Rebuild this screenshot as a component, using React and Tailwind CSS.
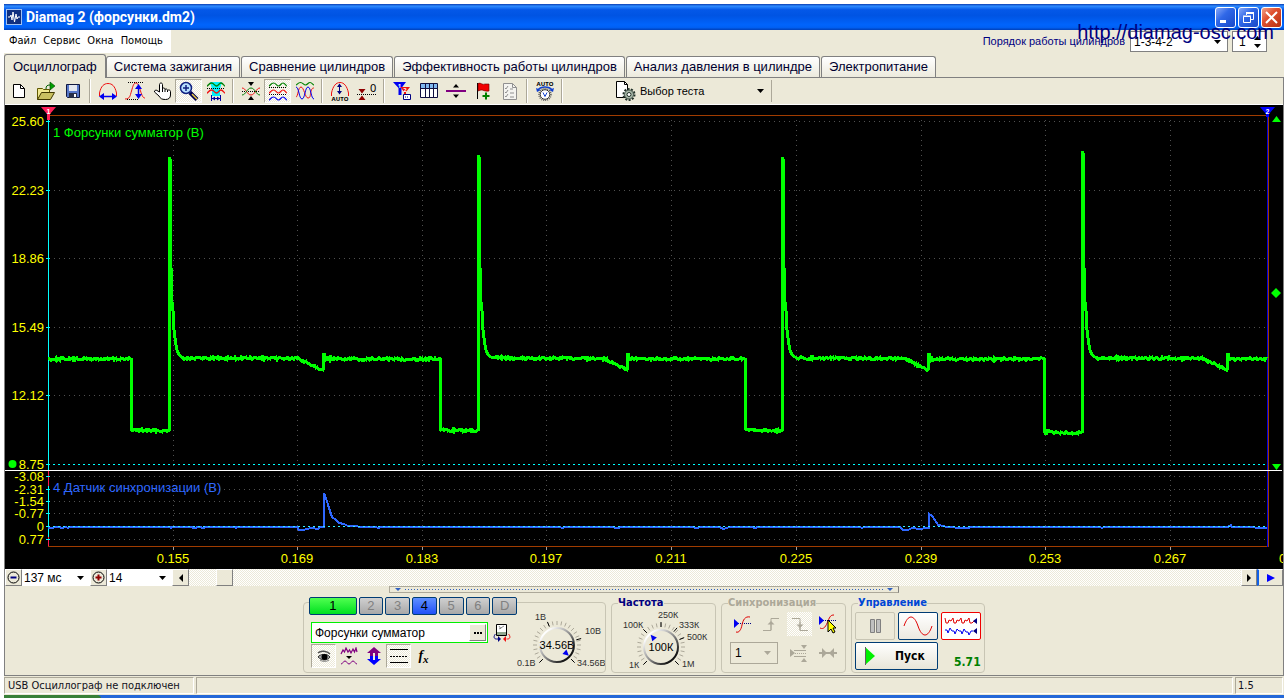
import React from "react";

const UI = "font-['Liberation_Sans',Arial,sans-serif]";
const TAHOMA = "font-['DejaVu_Sans_Condensed','DejaVu_Sans',sans-serif]";
const CHECKER = "bg-[repeating-conic-gradient(#ffffff_0_25%,#ece9d8_0_50%)] bg-[length:2px_2px]";
const RAISED = "border border-t-white border-l-white border-r-[#808080] border-b-[#808080] bg-[#ece9d8]";
const PRESSED = "border border-t-[#aca899] border-l-[#aca899] border-r-white border-b-white";

const BLUE = "#0000f0";
const RED = "#f01010";
const GREEN = "#008000";

/* ---------- waveform data ---------- */

function makeNoise(seed) {
  let s = seed;
  return () => {
    s = (s * 1103515245 + 12345) % 2147483648;
    return s / 2147483648 - 0.5;
  };
}

function injectorTrace() {
  const rnd = makeNoise(7);
  const pts = [];
  const flat = (x0, x1, y0, y1, amp) => {
    for (let x = x0; x < x1; x += 1) {
      const t = (x - x0) / (x1 - x0);
      pts.push([x, y0 + (y1 - y0) * t + rnd() * amp]);
    }
  };
  const cycles = [
    { drop: 131, rise: 169, peak: 157, low: 430, dip: 298, end: 323 },
    { drop: 440, rise: 478, peak: 155, low: 430, dip: 603, end: 627 },
    { drop: 745, rise: 782, peak: 157, low: 430, dip: 904, end: 928 },
    { drop: 1044, rise: 1082, peak: 151, low: 432, dip: 1203, end: 1227 },
  ];
  let x = 48;
  cycles.forEach((c) => {
    flat(x, c.drop, 359, 359, 2.4);
    pts.push([c.drop, 359], [c.drop, c.low - 1]);
    flat(c.drop + 1, c.rise - 1, c.low, c.low + 1, 2.4);
    pts.push(
      [c.rise, c.low], [c.rise, c.peak], [c.rise + 1, c.peak + 2], [c.rise + 1, 235], [c.rise + 2, 268],
      [c.rise + 3, 302], [c.rise + 4, 311], [c.rise + 5, 330], [c.rise + 6, 338], [c.rise + 7, 345],
      [c.rise + 8, 350], [c.rise + 10, 355], [c.rise + 13, 357]
    );
    flat(c.rise + 14, c.dip, 358, 358.5, 2.4);
    flat(c.dip, c.end, 358.5, 370, 2.4);
    pts.push([c.end, 370], [c.end + 1, 353], [c.end + 1, 358]);
    x = c.end + 2;
  });
  flat(x, 1268, 359, 359, 2.4);
  return pts.map(([a, b]) => a + "," + b.toFixed(1)).join(" ");
}

const SYNC_TRACE =
  "48,528 60,527 61,528 66,527 68,528 70,527 170,527 171,528 172,527 192,527 193,528 200,527 203,528 206,527 235,527 236,528 237,527 297,527 299,530 304,530 306,529 312,528 318,529 320,527 324,527 324,493 326,498 329,508 332,517 336,520 339,523 344,524 348,526 354,526 362,527 376,527 378,528 381,527 520,527 560,527 562,528 566,527 610,527 618,528 621,527 690,527 698,528 700,527 720,527 723,529 730,527 752,527 755,528 758,527 860,527 862,528 864,527 900,527 903,530 908,530 912,528 920,529 926,528 929,528 929,514 932,516 935,520 938,525 944,526 946,527 964,528 969,528 970,527 1100,527 1102,528 1104,527 1228,527 1231,525 1232,527 1254,527 1256,528 1267,528";

const Y_MAIN = [["25.60", 121], ["22.23", 190], ["18.86", 258], ["15.49", 327], ["12.12", 395], ["8.75", 464]];
const Y_SYNC = [["-3.08", 476], ["-2.31", 489], ["-1.54", 501], ["-0.77", 513], ["0", 526], ["0.77", 539]];
const X_AXIS = [["0.155", 173], ["0.169", 297], ["0.183", 422], ["0.197", 546], ["0.211", 671], ["0.225", 796], ["0.239", 921], ["0.253", 1045], ["0.267", 1170]];

function Scope() {
  return (
    <svg viewBox="5 105 1278 464" className={"block w-full bg-black text-[13px] " + UI} role="img" aria-label="Осциллограмма">
      <g shapeRendering="crispEdges">
        {Y_MAIN.slice(0, 5).map(([l, y]) => (
          <line key={l} x1="54" x2="1267" y1={y + 0.5} y2={y + 0.5} stroke="#505050" strokeDasharray="1 4" />
        ))}
        {Y_SYNC.filter(([l]) => l !== "0").map(([l, y]) => (
          <line key={l} x1="54" x2="1267" y1={y + 0.5} y2={y + 0.5} stroke="#505050" strokeDasharray="1 4" />
        ))}
        {X_AXIS.map(([l, x]) => (
          <g key={l}>
            <line x1={x + 0.5} x2={x + 0.5} y1="120" y2="545" stroke="#505050" strokeDasharray="1 4" />
            <line x1={x + 0.5} x2={x + 0.5} y1="547" y2="550" stroke="#a0a0a0" />
          </g>
        ))}
        <path d="M48 115.500H1268M1268.500 115V547M48 546.500H1268" stroke="#a03c00" fill="none" />
        <path d="M1267.500 115V547" stroke="#0000e0" />
        <path d="M5 470.500H1282" stroke="#fff" />
        <path d="M48.500 115V470" stroke="#00ffff" />
        <path d="M48.500 471V546" stroke="#ff1850" />
        <path d="M48.500 486V537" stroke="#00ffff" />
        {Y_MAIN.concat(Y_SYNC).map(([l, y]) => (
          <path key={l} d={"M46 " + (y + 0.5) + "h4"} stroke="#00ffff" />
        ))}
        <path d="M48 464.500H1267" stroke="#00ffff" strokeDasharray="2 3" />
      </g>
      <polyline points={injectorTrace()} fill="none" stroke="#00ff00" strokeWidth="3" shapeRendering="crispEdges" />
      <polyline points={SYNC_TRACE} fill="none" stroke="#2f68ff" strokeWidth="2" shapeRendering="crispEdges" />
      <path d="M48 526.500H1267" stroke="#30f0ff" strokeDasharray="2 3" shapeRendering="crispEdges" />
      <path d="M41 107h15l-6 7v6h-3v-6z" fill="#ff2058" />
      <path d="M1260 107h15l-6 7v3h-3v-3z" fill="#0000ff" />
      <text x="48.500" y="113.500" textAnchor="middle" fontSize="7" fontWeight="700" fill="#fff">1</text>
      <text x="1267.500" y="113.500" textAnchor="middle" fontSize="7" fontWeight="700" fill="#fff">2</text>
      <path d="M1272 122l4.500-6 4.500 6zM1272 464h9l-4.500 6zM1271 293l5-5 5 5-5 5z" fill="#00ff00" />
      <circle cx="12.500" cy="464" r="4" fill="#00ff00" />
      <g fill="#ffff00">
        {Y_MAIN.map(([l, y]) => <text key={l} x="44" y={y + 5} textAnchor="end">{l}</text>)}
        {Y_SYNC.map(([l, y]) => <text key={l} x="44" y={y + 5} textAnchor="end">{l}</text>)}
        {X_AXIS.map(([l, x]) => <text key={l} x={x} y="563" textAnchor="middle">{l}</text>)}
        <text x="1279" y="563">0</text>
      </g>
      <text x="53" y="137" fill="#00ff00">1 Форсунки сумматор (В)</text>
      <text x="53" y="492" fill="#2f68ff">4 Датчик синхронизации (В)</text>
    </svg>
  );
}

/* ---------- toolbar icons, 20x20 grid ---------- */

function Icon({ children }) {
  return <svg viewBox="0 0 20 20" className="size-5 shrink-0" fill="none" aria-hidden="true">{children}</svg>;
}

const wave = (y) => "M1 " + y + "c1 0 2-3 4.500-3s3 3 5 3 2.500-3 4.500-3 3 3 4 3";

const ICONS = {
  new: <Icon><path d="M4.500 3.500h7l4 4v9h-11z" fill="#fff" stroke="#000" /><path d="M11.500 3.500v4h4" stroke="#000" /></Icon>,
  open: (
    <Icon>
      <path d="M1.500 18.500v-11h5l1 1h6v4" fill="#f0e890" stroke="#605800" />
      <path d="M1.500 18.500l4-7h13l-4 7z" fill="#c8c060" stroke="#403800" />
      <path d="M10 8c0-3 1-4 4-4" stroke="#006000" />
      <path d="M14 1v8l5-4z" fill="#00a000" stroke="#004000" strokeWidth=".6" />
    </Icon>
  ),
  save: (
    <Icon>
      <path d="M3.500 3.500h13v13h-12l-1-1z" fill="#5878c8" stroke="#101840" />
      <path d="M6 4h8v6H6z" fill="#e4e8f0" /><path d="M6 12h8v5H6z" fill="#283048" /><path d="M11 13h2v3h-2z" fill="#fff" />
    </Icon>
  ),
  lens: (
    <Icon>
      <path d="M1.500 15V12C3 5 6 2.500 10 2.500S17 5 18.500 12V15" stroke={RED} />
      <path d="M3 15.500h14" stroke={BLUE} strokeWidth="1.500" /><path d="M6 12v7l-5-3.500zM14 12v7l5-3.500z" fill={BLUE} />
    </Icon>
  ),
  amp: (
    <Icon>
      <path d="M3 1.500h16M2 18.500h11" stroke="#000" strokeDasharray="1 1" />
      <path d="M0 18c5 0 5-3 6.500-8S8.500 2 11 2s3.500 5 5 9.500S18.500 17 20 17" stroke={RED} />
      <path d="M13.500 5v11" stroke={BLUE} strokeWidth="1.500" /><path d="M10 8h7l-3.500-5zM10 13h7l-3.500 5z" fill={BLUE} />
    </Icon>
  ),
  hand: (
    <Icon>
      <path d="M7.500 11V3.500c0-2 3-2 3 0V8l0-.5c1-1 2.500-.5 2.500 1 1-1 2.500-.5 2.500 1 1-1 3-.5 3 1V14c0 3-2 4.500-5 4.500-4 0-5-1-6.500-3.500L2.500 11c-.5-1.500 1.500-2.500 2.500-1.500z" fill="#fff" stroke="#000" />
      <path d="M10.500 7.500V11M13 8.500V11M15.500 9.500V11" stroke="#000" />
    </Icon>
  ),
  zoom: (
    <Icon>
      <path d="M11 11.500l7 7" stroke="#000050" strokeWidth="4" /><path d="M13 13l5 5" stroke="#e8c840" strokeWidth="1.500" />
      <circle cx="7" cy="7" r="5.500" fill="#b8e0ff" stroke="#102080" strokeWidth="1.500" />
      <path d="M7 4v6M4 7h6" stroke="#102080" strokeWidth="1.500" />
    </Icon>
  ),
  cursor: (
    <Icon>
      <path d="M4 1h12l-2 7v7H6V8z" fill="#00f0f8" />
      <path d={wave(5)} stroke={GREEN} strokeWidth="1.300" /><path d="M1 7.500h18" stroke="#000" strokeDasharray="1 1" />
      <path d={wave(12)} stroke={RED} strokeWidth="1.300" />
      <path d="M5.500 14v6M14.500 14v6M6 17.500h8" stroke="#0000a0" /><path d="M9 15.500v4l-3-2zM11 15.500v4l3-2z" fill="#0000a0" />
    </Icon>
  ),
  center: (
    <Icon>
      <path d="M7 1h6l-3 4zM7 19h6l-3-4z" fill="#000" />
      <path d="M1 10.500h18" stroke="#000" strokeDasharray="1 1" />
      <path d="M1 7c4 0 5 7 9 7s5-7 9-7" stroke={RED} /><path d="M1 14c4 0 5-7 9-7s5 7 9 7" stroke={GREEN} />
    </Icon>
  ),
  split: (
    <Icon>
      <path d={wave(5)} stroke={GREEN} strokeWidth="1.200" /><path d={wave(12)} stroke={RED} strokeWidth="1.200" /><path d={wave(19)} stroke={BLUE} strokeWidth="1.200" />
      <path d="M1 6.500h18M1 13.500h18" stroke="#000" strokeDasharray="1 1" />
    </Icon>
  ),
  overlay: (
    <Icon>
      <path d="M1 4c1 0 2-2.500 4.500-2.500s3 2.500 5 2.500 2.500-2.500 4.500-2.500 3 2.500 4 2.500" stroke={GREEN} strokeWidth="1.200" />
      <path d="M1 16C3 16 3 6 6 6s4 11 7 11 2-4 3-7 2-3 3-3" stroke={RED} />
      <path d="M1 6c3 0 3 12 6 12s3-12 6-12 3 12 6 12" stroke={BLUE} />
    </Icon>
  ),
  autoLens: (
    <Icon>
      <path d="M1.500 15V12C3 5 6 1.500 10 1.500S17 5 18.500 12V15" stroke={RED} />
      <path d="M9.500 4v9" stroke="#000080" /><path d="M7 6h5L9.500 2.500zM7 10h5l-2.500 3.500z" fill="#000080" />
      <text x="10" y="19.500" textAnchor="middle" fontSize="6" fontWeight="700" fill="#000">AUTO</text>
    </Icon>
  ),
  zero: (
    <Icon>
      <path d="M0 13.500h20" stroke="#000" strokeDasharray="1 1" />
      <path d="M1.500 8h7L5 12.500zM1.500 19h7L5 14.500z" fill="#900000" />
      <text x="13" y="11" fontSize="11" fill="#000">0</text>
    </Icon>
  ),
  filter: (
    <Icon>
      <path d="M1 1h13L9.500 7v7h-3V7z" fill="#0000f0" /><path d="M8.500 6h9.500l-4 5v4h-2v-4z" fill="#f01010" />
      <text x="7.500" y="7" textAnchor="middle" fontSize="6" fontWeight="700" fill="#fff">1</text>
      <text x="13" y="11" textAnchor="middle" fontSize="6" fontWeight="700" fill="#fff">2</text>
      <path d="M11.500 13.500h7v5h-7z" fill="#fff" stroke="#000080" /><path d="M13 16h4" stroke="#000080" strokeDasharray="1 1" />
    </Icon>
  ),
  table: (
    <Icon>
      <path d="M1.500 2.500h17v14h-17z" fill="#fff" stroke="#101040" /><path d="M2 3h16v4H2z" fill="#80b8f0" />
      <path d="M2 7.500h16M6.500 3v13M10.500 3v13M14.500 3v13" stroke="#101040" />
    </Icon>
  ),
  line: <Icon><path d="M0 10h20" stroke="#800080" strokeWidth="2" /><path d="M7 6.500h6L10 3zM7 13.500h6L10 17z" fill="#000" /></Icon>,
  flag: (
    <Icon>
      <path d="M4.500 2v16" stroke="#000" /><path d="M5 2.500c3-1.500 4 2 7 .5l4 0v7c-4 1-6-1.500-8-1l-3 1z" fill="#f00000" stroke="#600" strokeWidth=".6" />
      <path d="M13 11.500v7M9.500 15h7" stroke="#008000" strokeWidth="2" />
    </Icon>
  ),
  checklist: (
    <Icon>
      <path d="M3.500 2.500h9l4 4v12h-13z" fill="#f4f4f0" stroke="#909090" /><path d="M12.500 2.500v4h4" stroke="#909090" />
      <path d="M5 7l1 1 2-3M5 11l1 1 2-3M5 15l1 1 2-3M10 8h3M10 12h4M10 16h4" stroke="#909090" />
    </Icon>
  ),
  autoKnob: (
    <Icon>
      <text x="10" y="5" textAnchor="middle" fontSize="6" fontWeight="700" fill="#000">AUTO</text>
      <path d="M3 9c3-4 11-4 14 0" stroke="#1040d0" strokeWidth="1.500" /><path d="M1 7l1 4 4-2zM19 7l-1 4-4-2z" fill="#1040d0" />
      <circle cx="10" cy="13.500" r="6" stroke="#606060" strokeWidth="1.500" strokeDasharray="1 1" />
      <circle cx="10" cy="13.500" r="4.800" fill="#fff" stroke="#303030" /><path d="M8 11.500l2 4 2-4" stroke="#1040d0" />
    </Icon>
  ),
};

const GROUPS = [
  [["new", "Новый"], ["open", "Открыть"], ["save", "Сохранить"]],
  [["lens", "Растянуть"], ["amp", "Амплитуда"], ["hand", "Рука"], ["zoom", "Масштаб", true], ["cursor", "Курсоры"]],
  [["center", "По центру"], ["split", "Разделить", true], ["overlay", "Совместить"]],
  [["autoLens", "Авто"], ["zero", "Ноль"]],
  [["filter", "Фильтр"], ["table", "Таблица"], ["line", "Линия"], ["flag", "Метка"], ["checklist", "Отчёт"]],
  [["autoKnob", "Автонастройка"]],
];

function Separator() {
  return <span className="mx-[3px] h-6 w-[2px] shrink-0 border-l border-[#aca899] bg-white" />;
}

function Caret({ color = "#000" }) {
  return <svg viewBox="0 0 7 4" className="h-1 w-[7px] shrink-0" aria-hidden="true"><path d="M0 0h7L3.500 4z" fill={color} /></svg>;
}

function Picker({ label, options, className, caret, caretClass = "right-[6px]" }) {
  return (
    <span className={"relative flex shrink-0 items-center " + className}>
      <select aria-label={label} className="h-full w-full appearance-none bg-transparent pl-[2px] text-[12px] leading-none outline-none">
        {options.map((o) => <option key={o}>{o}</option>)}
      </select>
      <span className={"pointer-events-none absolute flex " + caretClass}><Caret color={caret} /></span>
    </span>
  );
}

/* ---------- window chrome ---------- */

function WinButton({ label, red, children }) {
  return (
    <button aria-label={label} className={"flex size-[21px] items-center justify-center rounded-[3px] border border-white " + (red ? "bg-[linear-gradient(135deg,#f0a088,#e05030_40%,#b83010)]" : "bg-[linear-gradient(135deg,#88a8f8,#3068e8_40%,#1848c8)]")}>
      <svg viewBox="0 0 17 17" className="size-[17px]" fill="none" stroke="#fff" aria-hidden="true">{children}</svg>
    </button>
  );
}

function TitleBar() {
  return (
    <header className="flex h-[26px] items-center bg-[linear-gradient(#0a3cb0,#2e8cff_8%,#0458e8_22%,#0054e3_45%,#0064fc_80%,#0060f4_90%,#0040b8)] pl-[2px] pr-[2px]">
      <svg viewBox="0 0 16 16" className="size-4" aria-hidden="true">
        <path d="M0 0h16v16H0z" fill="#a0c0f0" /><path d="M1 1h14v14H1z" fill="#103080" />
        <path d="M2 8h2l1-2 1 5 1-8 1.500 10L10 5l1 5 1-2h2" stroke="#fff" fill="none" />
      </svg>
      <h1 className="ml-1 flex-1 font-['Roboto',sans-serif] text-[14px] font-bold text-white">Diamag 2 (форсунки.dm2)</h1>
      <div className="flex gap-[2px]">
        <WinButton label="Свернуть"><path d="M3 12.500h6" strokeWidth="3" /></WinButton>
        <WinButton label="Развернуть"><path d="M6.500 6V3.500h7v7H11" /><path d="M6 4h8" strokeWidth="2" /><path d="M3.500 7.500h7v6h-7zM3 7h8" /></WinButton>
        <WinButton label="Закрыть" red><path d="M3 3l11 11M14 3l-11 11" strokeWidth="2" /></WinButton>
      </div>
    </header>
  );
}

function MenuBar() {
  return (
    <div className="relative flex h-6 items-start justify-between">
      <nav className={"flex h-[23px] items-center gap-[7px] bg-white pl-[5px] pr-2 text-[11px] " + TAHOMA}>
        {["Файл", "Сервис", "Окна", "Помощь"].map((m) => <button key={m}>{m}</button>)}
      </nav>
      <div className="flex items-center pr-[17px] pt-px">
        <label htmlFor="order" className={"pr-[5px] text-[11px] text-[#000080] " + UI}>Порядок работы цилиндров</label>
        <span className="relative flex h-[21px] w-[98px] items-center border border-[#808080] bg-white">
          <select id="order" className={"h-full w-full appearance-none pl-[3px] text-[12px] leading-none " + UI}><option>1-3-4-2</option></select>
          <span className="pointer-events-none absolute right-[6px] flex"><Caret /></span>
        </span>
        <span className="ml-1 flex h-[21px] w-[35px] items-center border border-[#808080] bg-white pr-[5px]">
          <input aria-label="Цилиндр" defaultValue="1" className={"w-0 flex-1 pl-[6px] text-[12px] leading-none " + UI} />
          <svg viewBox="0 0 7 12" className="h-3 w-[7px]" aria-hidden="true"><path d="M0 4h7L3.500 0zM0 8h7l-3.500 4z" fill="#000" /></svg>
        </span>
      </div>
      <a href="http://diamag-osc.com" className={"absolute right-[10px] -top-[10px] text-[20px] leading-6 text-[#000080] " + UI}>http://diamag-osc.com</a>
    </div>
  );
}

function Tabs() {
  const tabs = ["Осциллограф", "Система зажигания", "Сравнение цилиндров", "Эффективность работы цилиндров", "Анализ давления в цилиндре", "Электропитание"];
  return (
    <div role="tablist" className={"flex h-[23px] items-end text-[13px] text-[#000030] " + UI}>
      {tabs.map((t, i) => (
        <button
          key={t}
          role="tab"
          aria-selected={i === 0}
          className={"shrink-0 rounded-t-[3px] border border-[#808080] whitespace-nowrap leading-[18px] " + (i === 0 ? "relative -mb-px h-6 border-b-0 bg-[#ece9d8] px-2" : "mr-px h-[21px] border-b-0 bg-[linear-gradient(#ffffff,#eceadd)] px-[7px]")}
        >
          {t}
        </button>
      ))}
    </div>
  );
}

function Toolbar() {
  return (
    <div role="toolbar" className="flex h-[26px] items-center">
      {GROUPS.map((g, i) => (
        <React.Fragment key={i}>
          {i > 0 && <Separator />}
          {g.map(([name, label, on]) => (
            <button key={name} aria-label={label} aria-pressed={!!on} className={"flex h-6 w-[27px] shrink-0 items-center justify-center " + (on ? CHECKER + " " + PRESSED : "")}>
              {ICONS[name]}
            </button>
          ))}
        </React.Fragment>
      ))}
      <Separator />
      <button className={"ml-12 flex h-6 w-[150px] items-center gap-1 text-[11px] " + UI}>
        <svg viewBox="0 0 22 20" className="h-5 w-[22px]" fill="none" aria-hidden="true">
          <path d="M2.500 .5h8l3 3v13h-11z" fill="#fff" stroke="#000" /><path d="M10.500 .5v3h3" stroke="#000" />
          <circle cx="15" cy="13.500" r="5.500" stroke="#203028" strokeWidth="2" strokeDasharray="2 1.400" />
          <circle cx="15" cy="13.500" r="4.500" fill="#a8b8a8" stroke="#405048" /><circle cx="15" cy="13.500" r="2" fill="#fff" stroke="#203028" />
        </svg>
        <span className="flex-1 text-left">Выбор теста</span>
        <Caret />
      </button>
      <span className="ml-1"><Separator /></span>
    </div>
  );
}

/* ---------- bottom area ---------- */

function ScrollRow() {
  return (
    <div className={"flex h-[17px] items-stretch text-[12px] " + UI}>
      <button aria-label="Уменьшить" className={"flex w-[17px] shrink-0 items-center justify-center " + RAISED}>
        <svg viewBox="0 0 13 13" className="size-[13px] shrink-0" fill="none" aria-hidden="true"><circle cx="6.500" cy="6.500" r="5.500" stroke="#000" /><path d="M3.500 6.500h6" stroke="#000080" strokeWidth="2" /></svg>
      </button>
      <Picker label="Длительность" options={["137 мс"]} className="w-[68px] bg-white" />
      <button aria-label="Увеличить" className={"flex w-[17px] shrink-0 items-center justify-center " + RAISED}>
        <svg viewBox="0 0 13 13" className="size-[13px] shrink-0" fill="none" aria-hidden="true"><circle cx="6.500" cy="6.500" r="5.500" stroke="#000" /><path d="M3.500 6.500h6M6.500 3.500v6" stroke="#900000" strokeWidth="2" /></svg>
      </button>
      <Picker label="Масштаб" options={["14"]} className="w-[65px] bg-white" />
      <button aria-label="Назад" className={"flex w-[17px] shrink-0 items-center justify-center " + RAISED}>
        <svg viewBox="0 0 4 8" className="h-2 w-1" aria-hidden="true"><path d="M4 0v8L0 4z" /></svg>
      </button>
      <div className={"flex flex-1 " + CHECKER}><span className={"ml-[27px] w-[17px] " + RAISED} /></div>
      <button aria-label="Вперёд" className={"flex w-4 shrink-0 items-center justify-center " + RAISED}>
        <svg viewBox="0 0 4 8" className="h-2 w-1" aria-hidden="true"><path d="M0 0v8l4-4z" /></svg>
      </button>
      <button aria-label="Воспроизвести" className={"flex w-[26px] shrink-0 items-center justify-center border-l-2! border-l-[#1060e8]! " + RAISED}>
        <svg viewBox="0 0 8 8" className="size-2" aria-hidden="true"><path d="M0 0v8l8-4z" fill="#0000ff" /></svg>
      </button>
    </div>
  );
}

function Knob({ box, cx, cy, value, labels, majors, pointer, className }) {
  const ticks = [];
  for (let i = 0; i <= 24; i += 1) ticks.push(135 + i * 11.25);
  const ray = (a, r0, r1) => {
    const r = (a * Math.PI) / 180;
    return "M" + (cx + r0 * Math.cos(r)) + " " + (cy + r0 * Math.sin(r)) + "L" + (cx + r1 * Math.cos(r)) + " " + (cy + r1 * Math.sin(r));
  };
  const id = "rim" + cx;
  return (
    <svg viewBox={box} className={"shrink-0 text-[9px] " + UI + " " + className} role="img" aria-label={value}>
      <defs>
        <linearGradient id={id} x1="0" y1="0" x2="1" y2="1"><stop offset=".15" stopColor="#fff" /><stop offset=".5" stopColor="#909090" /><stop offset=".85" stopColor="#101010" /></linearGradient>
      </defs>
      <path d={ticks.map((a) => ray(a, 20, 24)).join("")} stroke="#aca899" />
      <path d={majors.map((a) => ray(a, 20, 25)).join("")} stroke="#000" />
      <circle cx={cx} cy={cy} r="17" fill="#ece9d8" stroke={"url(#" + id + ")"} strokeWidth="2" />
      <path transform={"rotate(" + pointer + " " + cx + " " + cy + ")"} d={"M" + (cx + 16) + " " + cy + "l-6-3v6z"} fill="#0000f0" />
      <text x={cx} y={cy + 4} textAnchor="middle" fontSize="11" fill="#000">{value}</text>
      {labels.map(([t, x, y]) => <text key={t} x={x} y={y} fill="#303030">{t}</text>)}
    </svg>
  );
}

function SmallIcon({ label, on, children, className = "" }) {
  return (
    <button aria-label={label} className={"flex h-6 w-[25px] shrink-0 items-center justify-center " + (on ? CHECKER + " " + PRESSED : "") + " " + className}>
      {children}
    </button>
  );
}

function ChannelGroup() {
  return (
    <section aria-label="Канал" className={"mt-[5px] flex w-[303px] rounded-[4px] border border-[#c8c5b4] " + UI}>
      <div className="-mt-[6px] flex w-[213px] flex-col pl-[5px]">
        <div className="flex gap-[2px] bg-[#ece9d8]">
          {["1", "2", "3", "4", "5", "6", "D"].map((c) => (
            <button
              key={c}
              className={"h-[18px] rounded-[2px] border border-[#003c74] text-[13px] leading-4 " + (c === "1" ? "w-12 bg-[linear-gradient(#50ff50,#00e020)] text-black" : c === "4" ? "w-[25px] bg-[linear-gradient(#6090ff,#2050f8)] text-black" : "w-[25px] bg-[linear-gradient(#d0d0d0,#a8a8a8)] text-[#808080]")}
            >
              {c}
            </button>
          ))}
        </div>
        <div className="mt-[7px] flex items-center gap-[5px] pl-[2px]">
          <div className="flex h-[21px] w-[177px] items-center border border-[#00f000] bg-white">
            <input aria-label="Имя канала" defaultValue="Форсунки сумматор" className="w-0 flex-1 pl-[3px] text-[12px] leading-4" />
            <button aria-label="Выбрать" className={"mr-px flex h-[17px] w-[17px] items-center justify-center " + RAISED}>
              <svg viewBox="0 0 8 2" className="h-[2px] w-2" aria-hidden="true"><path d="M0 0h2v2H0zM3 0h2v2H3zM6 0h2v2H6z" /></svg>
            </button>
          </div>
          <button aria-label="Сменить датчик">
            <svg viewBox="0 0 18 18" className="size-[18px]" fill="none" aria-hidden="true">
              <path d="M3.500 .5h10v11h-10z" fill="#fff" stroke="#000" /><path d="M4 8h9v3H4z" fill="#90a890" /><path d="M6 5l5-3M6 2l2 3" stroke="#606060" strokeWidth=".7" />
              <path d="M2.500 10c-2 2-2 5 1 5h2" stroke="#000080" /><path d="M5 12v6l3-3z" fill="#000080" />
              <path d="M15.500 10c2 2 2 5-1 5h-1" stroke={RED} /><path d="M13 12v6l-3-3z" fill={RED} />
            </svg>
          </button>
        </div>
        <div className="mt-px flex pl-[2px]">
          <SmallIcon label="Видимость" on>
            <svg viewBox="0 0 14 12" className="h-3 w-[14px]" fill="none" aria-hidden="true"><path d="M1 3c3-3 9-2 12 1" stroke="#505050" strokeWidth="1.500" /><path d="M1 7c2-3 9-4 12 0-3 4-8 4-12 0z" fill="#a8a8a8" stroke="#303030" /><circle cx="7.500" cy="7" r="3" fill="#000" /><path d="M3 10c3 2 6 2 9 0" stroke="#808080" /></svg>
          </SmallIcon>
          <SmallIcon label="Фильтр сигнала">
            <svg viewBox="0 0 18 18" className="size-[18px]" fill="none" stroke="#800080" aria-hidden="true"><path d="M1 7l2-4 1.500 2L6 1l2 4 1.500-2L11 6l2-4 1.500 3L16 1l1 4" strokeWidth="1.200" /><path d="M6 9h6l-3 3z" fill="#000" stroke="none" /><path d="M1 17c2 0 2-3 4-3s2 3 4 3 2-3 4-3 2 3 4 3" /></svg>
          </SmallIcon>
          <SmallIcon label="Смещение">
            <svg viewBox="0 0 14 18" className="h-[18px] w-[14px]" aria-hidden="true"><path d="M0 6l7-6 7 6h-3v3H8V6H6v3H3V6z" fill="#800080" /><path d="M0 12l7 6 7-6h-3V9H8v4H6V9H3v3z" fill="#0000ff" /></svg>
          </SmallIcon>
          <SmallIcon label="Уровни" on>
            <svg viewBox="0 0 18 14" className="h-[14px] w-[18px]" stroke="#000" aria-hidden="true"><path d="M0 .5h18M0 13.500h18" /><path d="M0 7.500h18" strokeDasharray="2 1" /></svg>
          </SmallIcon>
          <SmallIcon label="Функция"><span className="font-['Liberation_Serif',serif] text-[14px] font-bold italic leading-none">f<sub className="text-[11px]">x</sub></span></SmallIcon>
        </div>
      </div>
      <Knob
        box="517 605 88 66" className="h-[66px] w-[88px]" cx={557} cy={647} value="34.56В" pointer={42} majors={[135, 247.5, 345, 45]}
        labels={[["1В", 535, 622], ["10В", 585, 636], ["34.56В", 577, 668], ["0.1В", 517, 668]]}
      />
    </section>
  );
}

function Group({ title, color, className, children }) {
  return (
    <fieldset className={"min-w-0 rounded-[4px] border border-[#c8c5b4] " + className}>
      <legend className={"ml-[6px] h-3 text-[11px] font-bold leading-3 " + TAHOMA + " " + color}>{title}</legend>
      {children}
    </fieldset>
  );
}

function Controls() {
  const big = "flex h-7 w-10 items-center justify-center rounded-[2px] border ";
  return (
    <div className="mx-auto mt-1 flex w-fit gap-[5px]">
      <ChannelGroup />
      <Group title="Частота" color="text-[#000080]" className="w-[105px]">
        <Knob
          box="612 609 103 62" className="h-[62px] w-full" cx={661} cy={647} value="100К" pointer={230} majors={[135, 225, 270, 310, 338, 45]}
          labels={[["250К", 658, 618], ["100К", 623, 628], ["333К", 679, 628], ["500К", 687, 640], ["1К", 629, 668], ["1М", 682, 667]]}
        />
      </Group>
      <Group title="Синхронизация" color="text-[#aca899]" className="w-[125px]">
        <div className="mt-[3px] flex items-center pl-[7px]">
          <SmallIcon label="По уровню">
            <Icon><path d="M2 9.500h17" stroke="#000080" strokeDasharray="1 1" /><path d="M2 5l5 4.500L2 14z" fill="#0000f0" /><path d="M4 18c3 1 5-2 6-7s3-9 8-8" stroke="#e00000" /></Icon>
          </SmallIcon>
          <SmallIcon label="Фронт" className="ml-1"><Icon><path d="M2 16.500h8v-12h8M10 8v8" stroke="#aca899" /><path d="M6.500 10.500h7L10 7z" fill="#aca899" /></Icon></SmallIcon>
          <SmallIcon label="Спад" className={"ml-1 " + CHECKER}><Icon><path d="M2 4.500h8v12h8M10 8v8" stroke="#aca899" /><path d="M6.500 10.500h7L10 14z" fill="#aca899" /></Icon></SmallIcon>
          <SmallIcon label="Курсор синхронизации" className="ml-[3px]">
            <Icon><path d="M1 6.500h18" stroke="#000080" strokeDasharray="1 1" /><path d="M1 2l5 4.500L1 11z" fill="#0000f0" /><path d="M2 14c4 2 6-2 8-7s3-6 6-6" stroke="#e00000" /><path d="M10 6v12l3-3 2 4 2-1-2-4h3z" fill="#ffff00" stroke="#000" /></Icon>
          </SmallIcon>
        </div>
        <div className="mt-[5px] flex items-center pl-2">
          <Picker label="Канал синхронизации" options={["1"]} className={"h-[22px] w-12 border border-[#aca899] pl-[2px] " + UI} caret="#aca899" />
          <SmallIcon label="Окно" className="ml-2"><Icon><path d="M1 6l5 4-5 4zM12 2h6l-3 4zM12 19h6l-3-4z" fill="#aca899" /><path d="M5 7.500h12M5 13.500h12" stroke="#aca899" /><path d="M6 10.500h12" stroke="#aca899" strokeDasharray="1 1" /></Icon></SmallIcon>
          <SmallIcon label="Сжать" className="ml-1"><Icon><path d="M1 10h18" stroke="#aca899" strokeWidth="2" /><path d="M4 5l5 5-5 5zM16 5l-5 5 5 5z" fill="#aca899" /></Icon></SmallIcon>
        </div>
      </Group>
      <Group title="Управление" color="text-[#0046d5]" className="w-[134px]">
        <div className="mt-[3px] flex gap-[3px] pl-[3px]">
          <button aria-label="Пауза" className={big + "border-[#c8c5b4]"}>
            <svg viewBox="0 0 11 14" className="h-[14px] w-[11px]" aria-hidden="true"><path d="M.5 .5h4v13h-4zM6.500 .5h4v13h-4z" fill="#c0c0c0" stroke="#808080" /></svg>
          </button>
          <button aria-label="Синусоида" className={big + "border-[#003c74] bg-[linear-gradient(#ffffff,#ece9e0)]"}>
            <svg viewBox="0 0 30 20" className="h-5 w-[30px]" fill="none" stroke="#e00000" aria-hidden="true"><path d="M1 10C5-2 11-2 15 10s10 12 14 0" /></svg>
          </button>
          <button aria-label="Два сигнала" className={big + "border-[#f00000] bg-white"}>
            <svg viewBox="0 0 34 18" className="h-[18px] w-[34px]" fill="none" aria-hidden="true">
              <path d="M1 1l1 5h2l1-3 2 1 2-3 1 5h2l1-3 2 1 2-3 1 5h2l1-3 2 1 2-3 1 5h2l2-2" stroke="#e00000" />
              <path d="M1 13h2l1 3 2-5 2 3h2l1 3 2-5 2 2h2l1 3 2-5 2 3h2l1 3 2-4h2" stroke="#0000f0" />
              <path d="M33 1v6l-4-3zM33 11v6l-4-3z" fill="#000080" />
            </svg>
          </button>
        </div>
        <div className="mt-[2px] flex items-end pb-[2px] pl-[3px]">
          <button className={"flex h-7 w-[83px] items-center rounded-[2px] border border-[#003c74] bg-[linear-gradient(#ffffff,#e8e5d8)] pl-[9px] text-[12px] font-bold " + TAHOMA}>
            <svg viewBox="0 0 10 18" className="h-[18px] w-[10px]" aria-hidden="true"><path d="M0 0v18l10-9z" fill="#00f000" /><path d="M.5 0v18" stroke="#606060" /></svg>
            <span className="ml-5">Пуск</span>
          </button>
          <output className={"ml-4 text-[12px] font-bold leading-4 text-[#008000] " + TAHOMA}>5.71</output>
        </div>
      </Group>
    </div>
  );
}

function Splitter() {
  return (
    <div className="mx-auto flex h-[7px] w-[510px] items-center gap-1 border border-t-[#aca899] border-l-[#aca899] border-r-[#808080] border-b-[#aca899] px-[5px]">
      <svg viewBox="0 0 6 3" className="h-[3px] w-[6px]" aria-hidden="true"><path d="M0 0h6L3 3z" fill="#3060c0" /></svg>
      <span className="h-px flex-1 bg-[repeating-linear-gradient(90deg,#3060c0_0_1px,transparent_1px_3px)]" />
      <svg viewBox="0 0 6 3" className="h-[3px] w-[6px]" aria-hidden="true"><path d="M0 0h6L3 3z" fill="#3060c0" /></svg>
    </div>
  );
}

function StatusBar() {
  return (
    <footer className={"flex h-[19px] gap-[2px] py-px pr-px text-[11px] leading-[15px] text-[#101020] " + TAHOMA}>
      <span className={"w-[190px] pl-[3px] " + PRESSED}>USB Осциллограф не подключен</span>
      <span className={"flex-1 " + PRESSED} />
      <span className={"w-12 pl-[2px] " + PRESSED}>1.5</span>
    </footer>
  );
}

export default function App() {
  return (
    <div className="bg-white px-1 pt-1 text-black">
      <div className="bg-[#ece9d8]">
        <TitleBar />
        <MenuBar />
        <Tabs />
        <main className="border border-[#808080] pb-[2px]">
          <Toolbar />
          <div className="h-px bg-white" />
          <Scope />
          <ScrollRow />
          <Splitter />
          <Controls />
        </main>
        <StatusBar />
      </div>
      <div className="flex h-1 bg-[#2468d8]"><span className="w-[97px] rounded-tr-[4px] bg-[#388038]" /></div>
    </div>
  );
}
